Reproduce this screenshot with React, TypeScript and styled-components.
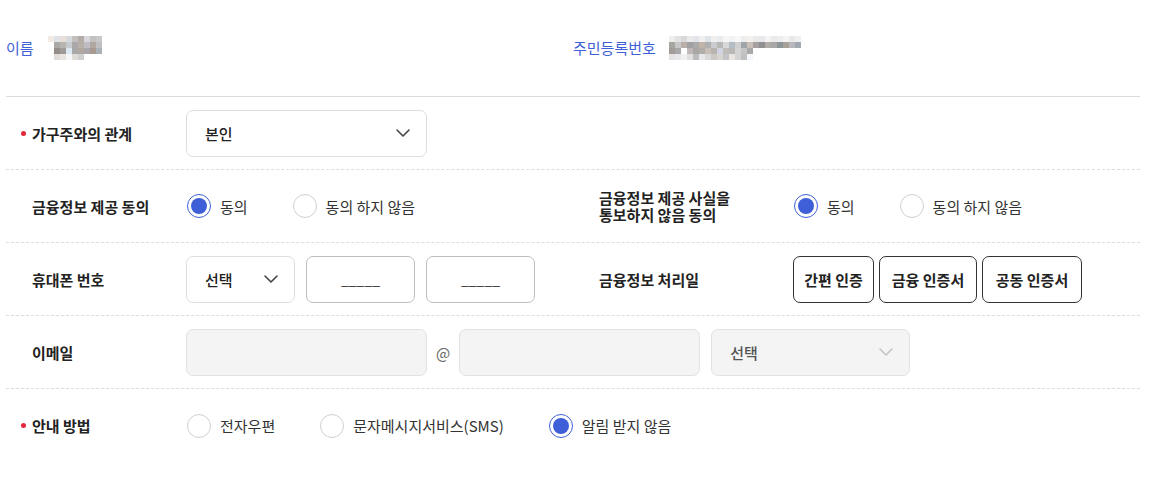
import React from "react";
import styled, { createGlobalStyle, css } from "styled-components";

const GlobalStyle = createGlobalStyle`
  html, body { margin: 0; padding: 0; background: #fff; }
  body { font-family: "Noto Sans CJK KR", "Noto Sans", sans-serif; color: #222; }
  * { box-sizing: border-box; }
`;

const BLUE = "#3e5fd8";

const Page = styled.div`
  width: 1140px;
  padding-left: 6px;
`;

const Header = styled.div`
  display: flex;
  align-items: center;
  height: 97px;
  border-bottom: 1px solid #dcdcdc;
`;

const HeaderItem = styled.div<{ $gap: number }>`
  flex: 0 0 567px;
  display: flex;
  align-items: center;
  gap: ${(p) => p.$gap}px;
`;

const HeaderLabel = styled.span`
  font-size: 15px;
  color: ${BLUE};
  line-height: 20px;
`;

const Row = styled.div`
  display: flex;
  align-items: center;
  height: 73px;
  border-bottom: 1px dashed #dddddd;
  &:last-child { border-bottom: none; }
`;

const Cell = styled.div<{ $wide?: boolean }>`
  display: flex;
  align-items: center;
  flex: ${(p) => (p.$wide ? "1 1 auto" : "0 0 567px")};
`;

const Label = styled.div<{ $w: number; $required?: boolean }>`
  position: relative;
  flex: 0 0 ${(p) => p.$w}px;
  padding-left: 26px;
  font-size: 15px;
  font-weight: 700;
  color: #222;
  line-height: 17px;
  ${(p) =>
    p.$required &&
    css`
      &::before {
        content: "";
        position: absolute;
        left: 15px;
        top: 6px;
        width: 5px;
        height: 5px;
        border-radius: 50%;
        background: #e5273a;
      }
    `}
`;

const RadioGroup = styled.div`
  display: flex;
  align-items: center;
  gap: 44px;
`;

const Option = styled.label`
  display: flex;
  align-items: center;
  gap: 9px;
  font-size: 15px;
  color: #333;
`;

const RadioCircle = styled.span<{ $checked?: boolean }>`
  position: relative;
  width: 24px;
  height: 24px;
  margin-left: 1px;
  border-radius: 50%;
  border: 1px solid ${(p) => (p.$checked ? BLUE : "#cfcfcf")};
  background: #fff;
  ${(p) =>
    p.$checked &&
    css`
      &::after {
        content: "";
        position: absolute;
        left: 3px;
        top: 3px;
        width: 16px;
        height: 16px;
        border-radius: 50%;
        background: ${BLUE};
      }
    `}
`;

const SelectBox = styled.div<{ $w: number; $disabled?: boolean }>`
  display: flex;
  align-items: center;
  justify-content: space-between;
  width: ${(p) => p.$w}px;
  height: 47px;
  padding: 0 16px 0 18px;
  border: 1px solid ${(p) => (p.$disabled ? "#e2e2e2" : "#dedede")};
  border-radius: 7px;
  background: ${(p) => (p.$disabled ? "#f4f4f4" : "#fff")};
  font-size: 15px;
  color: ${(p) => (p.$disabled ? "#555" : "#222")};
  font-weight: 500;
`;

const TextBox = styled.div<{ $w: number; $disabled?: boolean }>`
  display: flex;
  align-items: center;
  justify-content: center;
  width: ${(p) => p.$w}px;
  height: 47px;
  border: 1px solid ${(p) => (p.$disabled ? "#e2e2e2" : "#bdbdbd")};
  border-radius: 7px;
  background: ${(p) => (p.$disabled ? "#f4f4f4" : "#fff")};
  font-size: 14px;
  color: #333;
`;

const Fields = styled.div`
  display: flex;
  align-items: center;
  gap: 11px;
`;

const At = styled.span`
  margin: 0 -2px;
  font-size: 15px;
  color: #666;
`;

const ButtonGroup = styled.div`
  display: flex;
  align-items: center;
  gap: 5px;
`;

const AuthButton = styled.button<{ $w: number }>`
  width: ${(p) => p.$w}px;
  height: 47px;
  padding: 0;
  border: 1px solid #333;
  border-radius: 7px;
  background: #fff;
  font-family: inherit;
  font-size: 15px;
  font-weight: 700;
  color: #222;
`;

const Chevron = ({ color = "#444" }: { color?: string }) => (
  <svg width="14" height="8" viewBox="0 0 14 8" fill="none">
    <path d="M1 1l6 6 6-6" stroke={color} strokeWidth="1.6" strokeLinecap="round" strokeLinejoin="round" />
  </svg>
);

const Radio = ({ checked, children }: { checked?: boolean; children: React.ReactNode }) => (
  <Option>
    <RadioCircle $checked={checked} />
    {children}
  </Option>
);

const Mosaic = ({ rows, w }: { rows: string[][]; w: number }) => (
  <svg width={w} height={rows.length * 6} style={{ display: "block" }}>
    {rows.map((r, y) =>
      r.map((c, x) =>
        c ? <rect key={`${x}-${y}`} x={x * 6} y={y * 6} width="6" height="6" fill={c} /> : null
      )
    )}
  </svg>
);

const nameRows = [
  ["#f3ebe3", "#dfe3e8", "#e8e0d8", "#d6d8dc", "#c4bfbc", "#b3ada8", "#d8d8dc", "#c3c0c0", "#c8c8c8"],
  ["", "#aaa9a8", "#b8b4b0", "#c8ccd0", "#aaa8a8", "#b8b0a8", "#c0bcc4", "#b0a8a0", "#bfbfc2"],
  ["", "#958d89", "#a09a96", "#dde8f0", "#a8a8a8", "#b0a8a0", "#a9a6aa", "#a89a90", "#aab2b8"],
  ["", "#e0dcd8", "#e8e4e0", "#f5f7f9", "#e0dcd8", "#cfd0d2", "", "", ""],
];

const rrnRows = [
  ["#eceeef", "#e2e2e2", "#d8d8d8", "#eaeaea", "#e2e6ea", "#f0f0f0", "#e0e4e8", "#f2f0ee", "#e8ecef", "#f5f5f5", "#f0f2f4", "#f8f8f8", "#eeeeee", "#f4f0ee", "#eaeaea", "#e8e8ec", "#f4f4f4", "#ecebea", "#eeeeee", "#f4f4f4", "#e8e8e8", "#f0f0f0"],
  ["#a8a4a0", "#c8c8c8", "#b8b0a8", "#a0a0a4", "#aaaaaa", "#c0b4a8", "#b0b0b0", "#c8ccd0", "#b8b8b8", "#d8d8d8", "#b4bcc4", "#d0d0d0", "#9fa4a8", "#c8c0b8", "#a8a0a0", "#909090", "#b0aca8", "#a8a8a8", "#8c9498", "#a8a098", "#b8b8bc", "#a0a8b0"],
  ["#a09c98", "#a8a8a8", "#ffffff", "#c0b8b8", "#aaa6a6", "#b0aca8", "#c8c0b8", "#b8b4b0", "#d0d4e0", "#c0bcb8", "#b8b8b8", "#d4d4d4", "#c4c4c4", "#a8a8a8", "", "", "", "", "", "", "", ""],
  ["#e4e4e4", "#e8e8ec", "#f0f0f0", "#e0e0e0", "#bcbcbc", "#e8e8ec", "#d8d8d8", "#ccc8c4", "#d8d4d0", "#c4c4c8", "#e8e4e0", "#d4d4d4", "#c0c0c0", "#f4f8fc", "", "", "", "", "", "", "", ""],
];

export default function App() {
  return (
    <>
      <GlobalStyle />
      <Page>
        <Header>
          <HeaderItem $gap={14}>
            <HeaderLabel>이름</HeaderLabel>
            <Mosaic rows={nameRows} w={54} />
          </HeaderItem>
          <HeaderItem $gap={13}>
            <HeaderLabel>주민등록번호</HeaderLabel>
            <Mosaic rows={rrnRows} w={132} />
          </HeaderItem>
        </Header>

        <Row>
          <Cell>
            <Label $w={180} $required>가구주와의 관계</Label>
            <SelectBox $w={241}>
              <span>본인</span>
              <Chevron />
            </SelectBox>
          </Cell>
        </Row>

        <Row>
          <Cell>
            <Label $w={180}>금융정보 제공 동의</Label>
            <RadioGroup>
              <Radio checked>동의</Radio>
              <Radio>동의 하지 않음</Radio>
            </RadioGroup>
          </Cell>
          <Cell>
            <Label $w={220}>
              금융정보 제공 사실을
              <br />
              통보하지 않음 동의
            </Label>
            <RadioGroup>
              <Radio checked>동의</Radio>
              <Radio>동의 하지 않음</Radio>
            </RadioGroup>
          </Cell>
        </Row>

        <Row>
          <Cell>
            <Label $w={180}>휴대폰 번호</Label>
            <Fields>
              <SelectBox $w={109}>
                <span>선택</span>
                <Chevron />
              </SelectBox>
              <TextBox $w={109}>_____</TextBox>
              <TextBox $w={109}>_____</TextBox>
            </Fields>
          </Cell>
          <Cell>
            <Label $w={220}>금융정보 처리일</Label>
            <ButtonGroup>
              <AuthButton $w={81}>간편 인증</AuthButton>
              <AuthButton $w={98}>금융 인증서</AuthButton>
              <AuthButton $w={100}>공동 인증서</AuthButton>
            </ButtonGroup>
          </Cell>
        </Row>

        <Row>
          <Cell $wide>
            <Label $w={180}>이메일</Label>
            <Fields>
              <TextBox $w={241} $disabled />
              <At>@</At>
              <TextBox $w={241} $disabled />
              <SelectBox $w={199} $disabled>
                <span>선택</span>
                <Chevron color="#c4c4c4" />
              </SelectBox>
            </Fields>
          </Cell>
        </Row>

        <Row>
          <Cell $wide>
            <Label $w={180} $required>안내 방법</Label>
            <RadioGroup>
              <Radio>전자우편</Radio>
              <Radio>문자메시지서비스(SMS)</Radio>
              <Radio checked>알림 받지 않음</Radio>
            </RadioGroup>
          </Cell>
        </Row>
      </Page>
    </>
  );
}
